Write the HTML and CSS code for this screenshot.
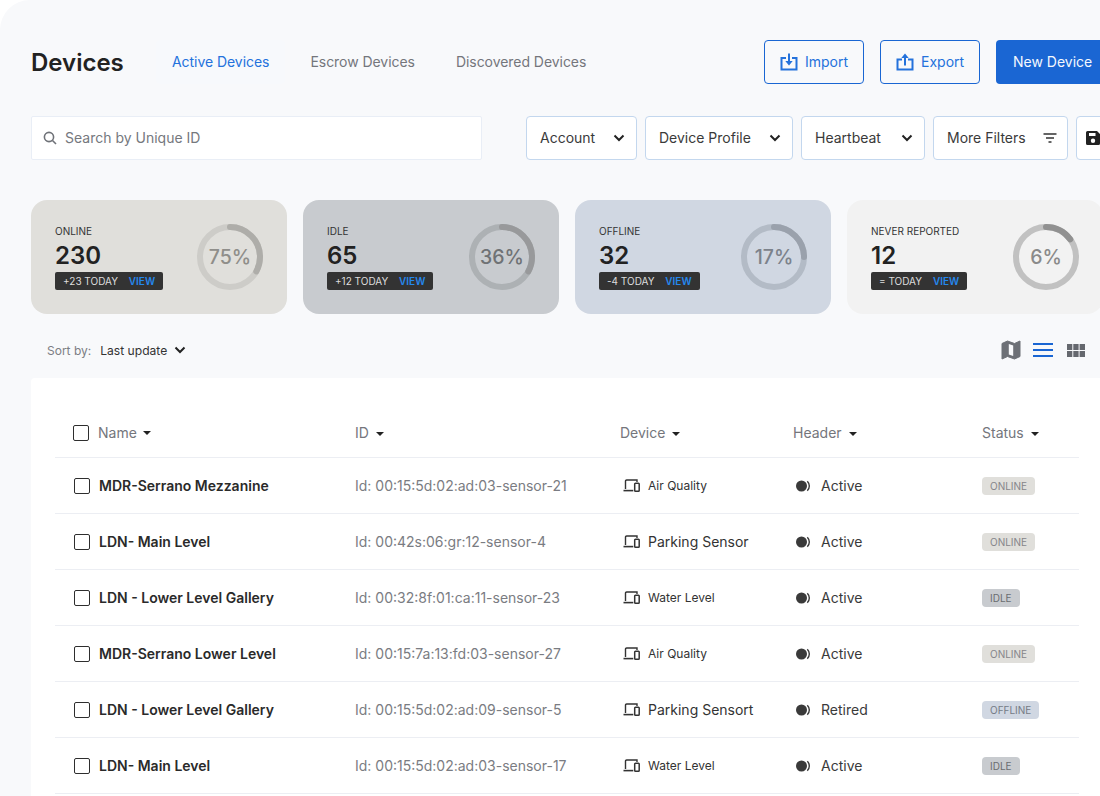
FILE: index.html
```html
<!DOCTYPE html>
<html>
<head>
<meta charset="utf-8" />
<title>Devices</title>
<link rel="stylesheet" href="styles.css">
</head>
<body>
<svg class="defs" width="0" height="0">
    <symbol id="chev" viewBox="0 0 12 8"><path d="M1.500 1.500 6 6l4.500-4.500" fill="none" stroke="currentColor" stroke-width="2"/></symbol>
    <symbol id="dev" viewBox="0 0 17 13"><path d="M2.500 10V2.200a1.200 1.200 0 0 1 1.200-1.200H14v2" fill="none" stroke="currentColor" stroke-width="1.400"/><path d="M.5 11.600h9.800" stroke="currentColor" stroke-width="1.600"/><rect x="11.700" y="4.200" width="4.500" height="8" rx=".8" fill="none" stroke="currentColor" stroke-width="1.500"/></symbol>
    <symbol id="hb" viewBox="0 0 15 12"><circle cx="5.500" cy="6" r="5.500" fill="currentColor"/><path d="M11.300 1.300a6.500 6.500 0 0 1 0 9.400" fill="none" stroke="currentColor" stroke-width="1.400"/></symbol>
</svg>
<div class="panel">
    <!-- top bar -->
    <div class="topbar">
        <h1>Devices</h1>
        <div class="tabs">
            <a class="tab on">Active Devices</a>
            <a class="tab">Escrow Devices</a>
            <a class="tab">Discovered Devices</a>
        </div>
        <div class="actions">
            <a class="btn line">
                <svg width="18" height="18" viewBox="0 0 18 18" fill="none" stroke="currentColor" stroke-width="2"><path d="M6 5H1.500v11.500h15V5H12"/><path d="M9 .5v7.500"/><path d="M9 12.500 5.300 8h7.400z" fill="currentColor" stroke="none"/></svg>
                Import
            </a>
            <a class="btn line">
                <svg width="18" height="18" viewBox="0 0 18 18" fill="none" stroke="currentColor" stroke-width="2"><path d="M6 6.500H1.500v10h15v-10H12"/><path d="M9 12.500V4.500"/><path d="M9 .5 5.300 5h7.400z" fill="currentColor" stroke="none"/></svg>
                Export
            </a>
            <a class="btn solid">New Device</a>
        </div>
    </div>

    <!-- search and filters -->
    <div class="filterbar">
        <div class="search">
            <svg width="14" height="14" viewBox="0 0 14 14" fill="none" stroke="#6f7278" stroke-width="1.600"><circle cx="6" cy="6" r="4.600"/><path d="m9.500 9.500 3.500 3.500"/></svg>
            <span>Search by Unique ID</span>
        </div>
        <div class="filters">
            <a class="filter f-account">Account <svg width="12" height="8"><use href="#chev"/></svg></a>
            <a class="filter f-profile">Device Profile <svg width="12" height="8"><use href="#chev"/></svg></a>
            <a class="filter f-heart">Heartbeat <svg width="12" height="8"><use href="#chev"/></svg></a>
            <a class="filter f-more">More Filters
                <svg width="14" height="10" viewBox="0 0 14 10" stroke="#333" stroke-width="1.400"><path d="M.500 1h13M3 5h8M5.500 9h3"/></svg>
            </a>
            <a class="filter f-save">
                <svg width="14" height="14" viewBox="0 0 14 14"><path d="M1.500 0H11l3 3v9.500a1.500 1.500 0 0 1-1.500 1.500h-11A1.500 1.500 0 0 1 0 12.500v-11A1.500 1.500 0 0 1 1.500 0zM3 2v3h6.500V2zM7 7.500a2.200 2.200 0 1 0 0 4.400 2.200 2.200 0 0 0 0-4.400z" fill="#222" fill-rule="evenodd"/></svg>
            </a>
        </div>
    </div>

    <!-- summary cards -->
    <div class="cards">
        <div class="card c-online">
            <div class="info">
                <div class="lbl">ONLINE</div>
                <div class="num">230</div>
                <div class="today">+23 TODAY <b>VIEW</b></div>
            </div>
            <div class="ring">
                <svg width="66" height="66" viewBox="0 0 66 66"><circle class="track" cx="33" cy="33" r="30"/><circle class="arc" cx="33" cy="33" r="30" pathLength="100" stroke-dasharray="33 100"/></svg>
                <span>75%</span>
            </div>
        </div>
        <div class="card c-idle">
            <div class="info">
                <div class="lbl">IDLE</div>
                <div class="num">65</div>
                <div class="today">+12 TODAY <b>VIEW</b></div>
            </div>
            <div class="ring">
                <svg width="66" height="66" viewBox="0 0 66 66"><circle class="track" cx="33" cy="33" r="30"/><circle class="arc" cx="33" cy="33" r="30" pathLength="100" stroke-dasharray="33 100"/></svg>
                <span>36%</span>
            </div>
        </div>
        <div class="card c-offline">
            <div class="info">
                <div class="lbl">OFFLINE</div>
                <div class="num">32</div>
                <div class="today">-4 TODAY <b>VIEW</b></div>
            </div>
            <div class="ring">
                <svg width="66" height="66" viewBox="0 0 66 66"><circle class="track" cx="33" cy="33" r="30"/><circle class="arc" cx="33" cy="33" r="30" pathLength="100" stroke-dasharray="25 100"/></svg>
                <span>17%</span>
            </div>
        </div>
        <div class="card c-never">
            <div class="info">
                <div class="lbl">NEVER REPORTED</div>
                <div class="num">12</div>
                <div class="today">= TODAY <b>VIEW</b></div>
            </div>
            <div class="ring">
                <svg width="66" height="66" viewBox="0 0 66 66"><circle class="track" cx="33" cy="33" r="30"/><circle class="arc" cx="33" cy="33" r="30" pathLength="100" stroke-dasharray="15 100"/></svg>
                <span>6%</span>
            </div>
        </div>
    </div>

    <!-- sort and view switch -->
    <div class="sortbar">
        <div class="sort"><span class="sortlbl">Sort by:</span> <span class="sortval">Last update</span> <svg width="12" height="8"><use href="#chev"/></svg></div>
        <div class="views">
            <svg width="20" height="20" viewBox="0 0 20 20"><path d="M1 3.500 6.500 1 13.500 3.500 19 1v15.500L13.500 19l-7-2.500L1 19z" fill="#6d7076" stroke="#6d7076" stroke-linejoin="round"/><path d="M7.800 4 12.200 5.500v10.500L7.800 14.500z" fill="#f8f9fb"/></svg>
            <svg width="20" height="14" viewBox="0 0 20 14" fill="#1a66d3"><rect y="0" width="20" height="2"/><rect y="6" width="20" height="2"/><rect y="12" width="20" height="2"/></svg>
            <svg class="gridview" width="18" height="13" viewBox="0 0 18 13" fill="#65686e"><rect width="5.300" height="6"/><rect x="6.300" width="5.300" height="6"/><rect x="12.600" width="5.400" height="6"/><rect y="7" width="5.300" height="6"/><rect x="6.300" y="7" width="5.300" height="6"/><rect x="12.600" y="7" width="5.400" height="6"/></svg>
        </div>
    </div>

    <!-- device table -->
    <div class="tablecard">
        <div class="row head">
            <div class="col-name"><i class="check"></i>Name <i class="caret"></i></div>
            <div>ID <i class="caret"></i></div>
            <div>Device <i class="caret"></i></div>
            <div>Header <i class="caret"></i></div>
            <div>Status <i class="caret"></i></div>
        </div>
        <div class="row">
            <div class="col-name name"><i class="check"></i>MDR-Serrano Mezzanine</div>
            <div class="uid">Id: 00:15:5d:02:ad:03-sensor-21</div>
            <div class="device"><svg width="17" height="13"><use href="#dev"/></svg><span class="small">Air Quality</span></div>
            <div class="hdr"><svg width="15" height="12"><use href="#hb"/></svg>Active</div>
            <div><span class="pill online">ONLINE</span></div>
        </div>
        <div class="row">
            <div class="col-name name"><i class="check"></i>LDN- Main Level</div>
            <div class="uid">Id: 00:42s:06:gr:12-sensor-4</div>
            <div class="device"><svg width="17" height="13"><use href="#dev"/></svg><span>Parking Sensor</span></div>
            <div class="hdr"><svg width="15" height="12"><use href="#hb"/></svg>Active</div>
            <div><span class="pill online">ONLINE</span></div>
        </div>
        <div class="row">
            <div class="col-name name"><i class="check"></i>LDN - Lower Level Gallery</div>
            <div class="uid">Id: 00:32:8f:01:ca:11-sensor-23</div>
            <div class="device"><svg width="17" height="13"><use href="#dev"/></svg><span class="small">Water Level</span></div>
            <div class="hdr"><svg width="15" height="12"><use href="#hb"/></svg>Active</div>
            <div><span class="pill idle">IDLE</span></div>
        </div>
        <div class="row">
            <div class="col-name name"><i class="check"></i>MDR-Serrano Lower Level</div>
            <div class="uid">Id: 00:15:7a:13:fd:03-sensor-27</div>
            <div class="device"><svg width="17" height="13"><use href="#dev"/></svg><span class="small">Air Quality</span></div>
            <div class="hdr"><svg width="15" height="12"><use href="#hb"/></svg>Active</div>
            <div><span class="pill online">ONLINE</span></div>
        </div>
        <div class="row">
            <div class="col-name name"><i class="check"></i>LDN - Lower Level Gallery</div>
            <div class="uid">Id: 00:15:5d:02:ad:09-sensor-5</div>
            <div class="device"><svg width="17" height="13"><use href="#dev"/></svg><span>Parking Sensort</span></div>
            <div class="hdr"><svg width="15" height="12"><use href="#hb"/></svg>Retired</div>
            <div><span class="pill offline">OFFLINE</span></div>
        </div>
        <div class="row">
            <div class="col-name name"><i class="check"></i>LDN- Main Level</div>
            <div class="uid">Id: 00:15:5d:02:ad:03-sensor-17</div>
            <div class="device"><svg width="17" height="13"><use href="#dev"/></svg><span class="small">Water Level</span></div>
            <div class="hdr"><svg width="15" height="12"><use href="#hb"/></svg>Active</div>
            <div><span class="pill idle">IDLE</span></div>
        </div>
    </div>
</div>
</body>
</html>
```

FILE: styles.css
```css
* { box-sizing: border-box; }
html, body {
    margin: 0;
    height: 100%;
    background: #fff;
    overflow: hidden;
}
body {
    font-family: Inter, "Liberation Sans", sans-serif;
    font-size: 14px;
    color: #222;
}
.defs { position: absolute; }
svg { display: block; flex-shrink: 0; }

.panel {
    width: 1100px;
    height: 796px;
    overflow: hidden;
    background: #f8f9fb;
    border-top-left-radius: 30px;
    padding: 40px 0 0 31px;
}

/* top bar */
.topbar {
    display: flex;
    align-items: center;
    height: 44px;
    width: 1079px;
}
h1 {
    margin: 0;
    width: 125px;
    font-size: 24px;
    font-weight: 600;
    color: #222;
}
.tabs { display: flex; }
.tab {
    height: 44px;
    display: flex;
    align-items: center;
    padding: 0 16px 1px;
    margin-right: 9px;
    color: #74767c;
    letter-spacing: -.05px;
}
.tab.on {
    color: #2472dc;
    background: #f7f9fc;
    border-radius: 4px;
}
.actions {
    display: flex;
    gap: 16px;
    margin-left: auto;
    flex-shrink: 0;
}
.btn {
    height: 44px;
    display: flex;
    align-items: center;
    padding-bottom: 1px;
    border-radius: 4px;
    flex-shrink: 0;
}
.btn.line {
    width: 100px;
    gap: 7px;
    padding-left: 15px;
    border: 1px solid #1a66d3;
    color: #2472dc;
}
.btn.solid {
    width: 114px;
    padding-left: 17px;
    background: #1a66d3;
    color: #f4f8fe;
}

/* filters */
.filterbar {
    display: flex;
    margin-top: 32px;
    width: 1100px;
}
.search {
    width: 451px;
    height: 44px;
    display: flex;
    align-items: center;
    gap: 8px;
    padding: 0 0 1px 11px;
    background: #fff;
    border: 1px solid #e9eef6;
    color: #75787e;
    border-radius: 2px;
}
.filters {
    display: flex;
    gap: 8px;
    margin-left: 44px;
}
.filter {
    height: 44px;
    display: flex;
    align-items: center;
    justify-content: space-between;
    padding: 0 11px 1px 13px;
    background: #fff;
    border: 1px solid #c3d7ee;
    border-radius: 4px;
    color: #3a3a3a;
    flex-shrink: 0;
}
.f-account { width: 111px; }
.f-profile { width: 148px; }
.f-heart { width: 124px; }
.f-more { width: 135px; padding-right: 10px; }
.f-save { width: 40px; padding-left: 9px; }
.filter svg { color: #222; }

/* cards */
.cards {
    display: flex;
    gap: 16px;
    margin-top: 40px;
}
.card {
    width: 256px;
    height: 114px;
    flex-shrink: 0;
    display: flex;
    align-items: center;
    justify-content: space-between;
    padding: 0 24px;
    border-radius: 16px;
}
.lbl { font-size: 10px; line-height: 12px; color: #333; margin-bottom: 4px; }
.num { font-size: 24px; font-weight: 600; line-height: 30px; color: #222; }
.today {
    width: fit-content;
    height: 18px;
    line-height: 18px;
    margin-top: 1px;
    padding: 0 8px;
    background: #333;
    border-radius: 2px;
    font-size: 10px;
    color: #ddd;
    white-space: nowrap;
}
.today b { font-weight: 600; color: #2588ee; margin-left: 8px; }
.ring { position: relative; width: 66px; height: 66px; }
.ring svg { transform: rotate(-90deg); fill: none; }
.ring circle { stroke-width: 6; }
.ring .arc { stroke-linecap: round; }
.ring span {
    position: absolute;
    top: 0;
    left: 0;
    width: 66px;
    line-height: 66px;
    text-align: center;
    font-size: 19.500px;
    font-weight: 500;
}
.c-online { background: #e0dfdb; }
.c-online .track { stroke: #cdccc8; }
.c-online .arc { stroke: #aeada9; }
.c-online span { color: #8f8e8a; }
.c-idle { background: #c8cbcf; }
.c-idle .track { stroke: #adb1b4; }
.c-idle .arc { stroke: #98999b; }
.c-idle span { color: #6f7275; }
.c-offline { background: #d0d7e2; }
.c-offline .track { stroke: #b3bbc6; }
.c-offline .arc { stroke: #9aa1ac; }
.c-offline span { color: #7c828b; }
.c-never { background: #f2f2f2; }
.c-never .track { stroke: #c1c1c1; }
.c-never .arc { stroke: #919191; }
.c-never span { color: #8a8a8a; }

/* sort */
.sortbar {
    display: flex;
    align-items: center;
    justify-content: space-between;
    height: 64px;
    width: 1054px;
    padding: 8px 0 0 16px;
}
.sort { display: flex; align-items: center; font-size: 12px; }
.sortlbl { color: #7c7e84; margin-right: 9px; }
.sortval { color: #333; margin-right: 7px; font-size: 12.100px; }
.views { display: flex; align-items: center; gap: 12px; }
.gridview { margin-left: 2px; }

/* table */
.tablecard {
    width: 1100px;
    height: 440px;
    background: #fff;
    border-radius: 4px 0 0 0;
    padding: 24px 0 0 24px;
}
.row {
    display: grid;
    grid-template-columns: 300px 265px 173px 189px 97px;
    align-items: center;
    width: 1024px;
    height: 56px;
    border-bottom: 1px solid #eceef3;
}
.head { color: #74767c; padding-top: 6px; }
.head .check { margin: 0 9px 0 -1px; }
.col-name { display: flex; align-items: center; padding-left: 19px; }
.caret {
    display: inline-block;
    margin-left: 3px;
    vertical-align: middle;
    border-left: 4.500px solid transparent;
    border-right: 4.500px solid transparent;
    border-top: 4.500px solid #222;
}
.col-name .caret { margin-left: 6px; }
.check {
    width: 16px;
    height: 16px;
    margin: 1px 9px 0 0;
    border: 1.500px solid #2e2e2e;
    border-radius: 2px;
    background: #fff;
}
.name { font-weight: 600; color: #2a2a2a; }
.uid { color: #7a7c82; }
.device {
    display: flex;
    align-items: center;
    gap: 8px;
    padding-left: 3px;
    color: #333;
}
.small { font-size: 12px; }
.hdr {
    display: flex;
    align-items: center;
    gap: 10px;
    padding-left: 3px;
    color: #3a3a3a;
}
.pill {
    display: block;
    width: fit-content;
    height: 18px;
    line-height: 18px;
    padding: 0 8px;
    border-radius: 4px;
    font-size: 10px;
    color: #85858a;
}
.online { background: #e0dfdb; }
.idle { background: #c8cbcf; color: #6a6d70; }
.offline { background: #d0d7e2; color: #757b85; }
```
